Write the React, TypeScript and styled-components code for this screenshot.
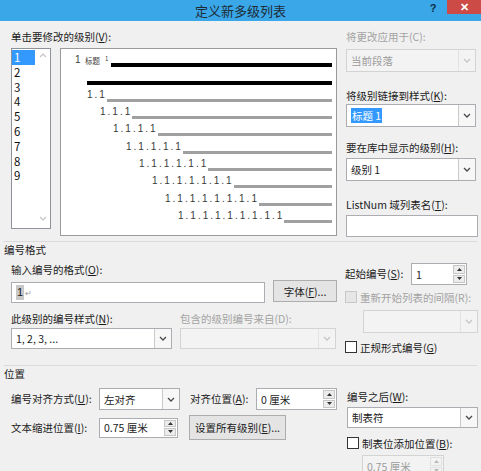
import React from "react";
import styled, { createGlobalStyle } from "styled-components";

const uiFont = `"Noto Sans CJK SC", "Microsoft YaHei", sans-serif`;

const GlobalStyle = createGlobalStyle`
  html, body {
    margin: 0;
    padding: 0;
    background: #f0f0f0;
  }
  body {
    font-family: ${uiFont};
    font-size: 10.5px;
    color: #1b1b1b;
  }
`;

const Dialog = styled.div`
  width: 481px;
  height: 471px;
  overflow: hidden;
  background: #f0f0f0;
  display: flex;
  flex-direction: column;
`;

const TitleBar = styled.div`
  flex: none;
  height: 21px;
  background: #3aa7e9;
  display: grid;
  grid-template-columns: 1fr auto 1fr;
  align-items: start;
`;

const TitleText = styled.div`
  grid-column: 2;
  line-height: 21px;
  font-size: 13px;
  color: #1d2b36;
`;

const TitleControls = styled.div`
  grid-column: 3;
  justify-self: end;
  display: flex;
  align-items: flex-start;
`;

const HelpButton = styled.span`
  width: 14px;
  margin-right: 7px;
  line-height: 17px;
  text-align: center;
  font-family: "Liberation Sans", sans-serif;
  font-weight: bold;
  font-size: 11px;
  color: #0e2f47;
`;

const CloseButton = styled.span`
  width: 34px;
  height: 14px;
  background: #cc4b47;
  color: #fff;
  display: flex;
  align-items: center;
  justify-content: center;
  font-family: "Liberation Sans", sans-serif;
  font-weight: bold;
  font-size: 11px;
`;

const TopArea = styled.div`
  display: flex;
  gap: 9px;
  margin-top: 8px;
  padding-left: 11px;
`;

const Column = styled.div<{ $w: number }>`
  width: ${(p) => p.$w}px;
  flex: none;
  display: flex;
  flex-direction: column;
`;

const Label = styled.div<{ $disabled?: boolean; $mt?: number; $w?: number; $ml?: number }>`
  flex: none;
  line-height: 16px;
  height: 16px;
  white-space: nowrap;
  color: ${(p) => (p.$disabled ? "#a3a3a3" : "#1b1b1b")};
  margin-top: ${(p) => p.$mt ?? 0}px;
  margin-left: ${(p) => p.$ml ?? 0}px;
  width: ${(p) => (p.$w ? `${p.$w}px` : "auto")};
`;

const LevelRow = styled.div`
  display: flex;
  gap: 9px;
  margin-top: 3px;
  align-items: flex-start;
`;

const LevelList = styled.div`
  width: 40px;
  height: 181px;
  box-sizing: border-box;
  border: 1px solid #8e9299;
  background: #fff;
  display: flex;
`;

const LevelItems = styled.div`
  width: 23px;
  padding-top: 1px;
`;

const LevelItem = styled.div<{ $selected?: boolean }>`
  height: 14.8px;
  line-height: 14.8px;
  padding-left: 2px;
  font-size: 11.5px;
  background: ${(p) => (p.$selected ? "#3399ff" : "transparent")};
  color: ${(p) => (p.$selected ? "#fff" : "#111")};
`;

const ListScroll = styled.div`
  flex: 1;
  display: flex;
  flex-direction: column;
  justify-content: space-between;
  align-items: center;
  padding: 4px 0 7px;
`;

const Preview = styled.div`
  width: 277px;
  height: 188px;
  box-sizing: border-box;
  border: 1px solid #9a9a9a;
  background: #fff;
  padding: 1px 4px 0 0;
  display: flex;
  flex-direction: column;
`;

const PreviewRow = styled.div<{ $indent: number }>`
  height: 17.3px;
  display: flex;
  align-items: flex-end;
  padding-left: ${(p) => p.$indent}px;
  box-sizing: border-box;
`;

const RowNumber = styled.span`
  font-family: "Liberation Sans", sans-serif;
  font-size: 10px;
  letter-spacing: 2px;
  line-height: 12px;
  color: #3a3a3a;
  margin-bottom: 1px;
`;

const HeadingTag = styled.span<{ $size: number; $ml: number; $mb: number }>`
  font-size: ${(p) => p.$size}px;
  line-height: ${(p) => p.$size + 2}px;
  color: #3a3a3a;
  margin-left: ${(p) => p.$ml}px;
  margin-bottom: ${(p) => p.$mb}px;
`;

const PreviewBar = styled.div<{ $heavy?: boolean; $ml?: number }>`
  flex: 1;
  height: ${(p) => (p.$heavy ? 4 : 3)}px;
  background: ${(p) => (p.$heavy ? "#000" : "#a0a0a0")};
  margin-left: ${(p) => p.$ml ?? 0}px;
`;

const Frame = styled.div<{ $w: number; $h: number; $disabled?: boolean; $mt?: number; $ml?: number }>`
  flex: none;
  width: ${(p) => p.$w}px;
  height: ${(p) => p.$h}px;
  margin-top: ${(p) => p.$mt ?? 0}px;
  margin-left: ${(p) => p.$ml ?? 0}px;
  box-sizing: border-box;
  border: 1px solid ${(p) => (p.$disabled ? "#d3d3d3" : "#abadb3")};
  background: ${(p) => (p.$disabled ? "#f3f3f3" : "#fff")};
  display: flex;
  align-items: stretch;
`;

const FieldValue = styled.div<{ $disabled?: boolean }>`
  flex: 1;
  min-width: 0;
  padding-left: 4px;
  display: flex;
  align-items: center;
  white-space: nowrap;
  color: ${(p) => (p.$disabled ? "#9c9c9c" : "#1b1b1b")};
`;

const ComboButton = styled.div<{ $disabled?: boolean }>`
  width: 16px;
  flex: none;
  border-left: 1px solid ${(p) => (p.$disabled ? "#e2e2e2" : "#c9c9c9")};
  background: ${(p) => (p.$disabled ? "#f3f3f3" : "#f7f7f7")};
  display: flex;
  align-items: center;
  justify-content: center;
`;

const SpinButtons = styled.div`
  width: 12px;
  flex: none;
  display: flex;
  flex-direction: column;
  gap: 1px;
  padding: 1px;
`;

const SpinHalf = styled.div<{ $disabled?: boolean }>`
  flex: 1;
  border: 1px solid ${(p) => (p.$disabled ? "#e0e0e0" : "#c6c6c6")};
  background: ${(p) => (p.$disabled ? "#f3f3f3" : "#ececec")};
  display: flex;
  align-items: center;
  justify-content: center;
`;

const Selection = styled.span`
  background: #3399ff;
  color: #fff;
  padding: 0 1px;
  line-height: 15px;
`;

const Caret = styled.span`
  background: #c8c8c8;
  padding: 0 1px;
  line-height: 15px;
  font-family: "Liberation Sans", sans-serif;
  font-size: 11px;
`;

const ReturnMark = styled.span`
  color: #9a9a9a;
  font-size: 8px;
  margin-left: 1px;
`;

const Button = styled.div<{ $w: number; $h: number; $ml?: number }>`
  flex: none;
  width: ${(p) => p.$w}px;
  height: ${(p) => p.$h}px;
  margin-left: ${(p) => p.$ml ?? 0}px;
  box-sizing: border-box;
  border: 1px solid #adadad;
  background: #e4e4e4;
  display: flex;
  align-items: center;
  justify-content: center;
  white-space: nowrap;
`;

const SectionHeader = styled.div<{ $mt: number }>`
  margin: ${(p) => p.$mt}px 4px 0;
  border-top: 1px solid #dadada;
  line-height: 16px;
  height: 16px;
`;

const SectionBody = styled.div<{ $gap: number }>`
  display: flex;
  gap: ${(p) => p.$gap}px;
  padding-left: 11px;
`;

const Row = styled.div<{ $mt?: number; $gap?: number; $align?: string }>`
  display: flex;
  align-items: ${(p) => p.$align ?? "center"};
  gap: ${(p) => p.$gap ?? 0}px;
  margin-top: ${(p) => p.$mt ?? 0}px;
`;

const CheckRow = styled.div<{ $mt: number }>`
  display: flex;
  align-items: center;
  gap: 3px;
  margin-top: ${(p) => p.$mt}px;
  height: 16px;
  white-space: nowrap;
`;

const CheckBox = styled.span<{ $disabled?: boolean }>`
  width: 12px;
  height: 12px;
  box-sizing: border-box;
  border: 1px solid ${(p) => (p.$disabled ? "#c8c8c8" : "#333")};
  background: ${(p) => (p.$disabled ? "#e6e6e6" : "#fff")};
`;

const CheckText = styled.span<{ $disabled?: boolean }>`
  color: ${(p) => (p.$disabled ? "#a3a3a3" : "#1b1b1b")};
`;

const Chevron = ({ color }: { color: string }) => (
  <svg width="8" height="5" viewBox="0 0 8 5">
    <polyline points="1,1 4,4 7,1" fill="none" stroke={color} strokeWidth="1.3" />
  </svg>
);

const ScrollArrow = ({ up }: { up?: boolean }) => (
  <svg width="8" height="5" viewBox="0 0 8 5">
    <polyline points={up ? "1,4 4,1 7,4" : "1,1 4,4 7,1"} fill="none" stroke="#c4c4c4" strokeWidth="1.2" />
  </svg>
);

const Triangle = ({ up, color }: { up?: boolean; color: string }) => (
  <svg width="5" height="3" viewBox="0 0 5 3">
    <polygon points={up ? "0,3 2.5,0 5,3" : "0,0 5,0 2.5,3"} fill={color} />
  </svg>
);

type FieldProps = {
  w: number;
  h: number;
  value?: React.ReactNode;
  disabled?: boolean;
  mt?: number;
  ml?: number;
};

const ComboBox = ({ w, h, value, disabled, mt, ml }: FieldProps) => (
  <Frame $w={w} $h={h} $disabled={disabled} $mt={mt} $ml={ml}>
    <FieldValue $disabled={disabled}>{value}</FieldValue>
    <ComboButton $disabled={disabled}>
      <Chevron color={disabled ? "#c6c6c6" : "#4a4a4a"} />
    </ComboButton>
  </Frame>
);

const SpinBox = ({ w, h, value, disabled, mt, ml }: FieldProps) => (
  <Frame $w={w} $h={h} $disabled={disabled} $mt={mt} $ml={ml}>
    <FieldValue $disabled={disabled}>{value}</FieldValue>
    <SpinButtons>
      <SpinHalf $disabled={disabled}>
        <Triangle up color={disabled ? "#b8b8b8" : "#333"} />
      </SpinHalf>
      <SpinHalf $disabled={disabled}>
        <Triangle color={disabled ? "#b8b8b8" : "#333"} />
      </SpinHalf>
    </SpinButtons>
  </Frame>
);

const levels = [2, 3, 4, 5, 6, 7, 8, 9];

const App: React.FC = () => {
  return (
    <>
      <GlobalStyle />
      <Dialog>
        <TitleBar>
          <TitleText>定义新多级列表</TitleText>
          <TitleControls>
            <HelpButton>?</HelpButton>
            <CloseButton>✕</CloseButton>
          </TitleControls>
        </TitleBar>

        <TopArea>
          <Column $w={326}>
            <Label>
              单击要修改的级别(<u>V</u>):
            </Label>
            <LevelRow>
              <LevelList>
                <LevelItems>
                  {[1, 2, 3, 4, 5, 6, 7, 8, 9].map((n) => (
                    <LevelItem key={n} $selected={n === 1}>
                      {n}
                    </LevelItem>
                  ))}
                </LevelItems>
                <ListScroll>
                  <ScrollArrow up />
                  <ScrollArrow />
                </ListScroll>
              </LevelList>
              <Preview>
                <PreviewRow $indent={14}>
                  <RowNumber>1</RowNumber>
                  <HeadingTag $size={7.5} $ml={2.5} $mb={2}>
                    标题
                  </HeadingTag>
                  <HeadingTag $size={6} $ml={5} $mb={4}>
                    1
                  </HeadingTag>
                  <PreviewBar $heavy $ml={2.5} />
                </PreviewRow>
                <PreviewRow $indent={26}>
                  <PreviewBar $heavy />
                </PreviewRow>
                {levels.map((n, i) => (
                  <PreviewRow key={n} $indent={26 + i * 13}>
                    <RowNumber>{Array(n).fill("1").join(".")}</RowNumber>
                    <PreviewBar />
                  </PreviewRow>
                ))}
              </Preview>
            </LevelRow>
          </Column>

          <Column $w={132}>
            <Label $disabled>将更改应用于(C):</Label>
            <ComboBox w={130} h={23} mt={4} disabled value="当前段落" />
            <Label $mt={16}>
              将级别链接到样式(<u>K</u>):
            </Label>
            <ComboBox w={130} h={23} value={<Selection>标题 1</Selection>} />
            <Label $mt={13}>
              要在库中显示的级别(<u>H</u>):
            </Label>
            <ComboBox w={130} h={23} mt={2} value="级别 1" />
            <Label $mt={16}>
              ListNum 域列表名(<u>T</u>):
            </Label>
            <Frame $w={132} $h={22} $mt={2} />
          </Column>
        </TopArea>

        <SectionHeader $mt={4}>编号格式</SectionHeader>
        <SectionBody $gap={8}>
          <Column $w={326}>
            <Label $mt={4}>
              输入编号的格式(<u>O</u>):
            </Label>
            <Row $mt={2} $gap={8} $align="flex-start">
              <Frame $w={254} $h={21} $mt={2}>
                <FieldValue>
                  <Caret>1</Caret>
                  <ReturnMark>↵</ReturnMark>
                </FieldValue>
              </Frame>
              <Button $w={64} $h={22}>
                字体(<u>F</u>)...
              </Button>
            </Row>
            <Row $mt={8}>
              <Label $w={169}>
                此级别的编号样式(<u>N</u>):
              </Label>
              <Label $disabled>包含的级别编号来自(D):</Label>
            </Row>
            <Row $mt={1} $gap={8}>
              <ComboBox w={161} h={21} value="1, 2, 3, ..." />
              <ComboBox w={156} h={21} disabled />
            </Row>
          </Column>

          <Column $w={133}>
            <Row $mt={5}>
              <Label $w={66}>
                起始编号(<u>S</u>):
              </Label>
              <SpinBox w={56} h={22} value="1" />
            </Row>
            <CheckRow $mt={4}>
              <CheckBox $disabled />
              <CheckText $disabled>重新开始列表的间隔(R):</CheckText>
            </CheckRow>
            <ComboBox w={115} h={23} mt={5} ml={18} disabled />
            <CheckRow $mt={6}>
              <CheckBox />
              <CheckText>
                正规形式编号(<u>G</u>)
              </CheckText>
            </CheckRow>
          </Column>
        </SectionBody>

        <SectionHeader $mt={10}>位置</SectionHeader>
        <SectionBody $gap={10}>
          <Column $w={326}>
            <Row $mt={6}>
              <Label $w={88}>
                编号对齐方式(<u>U</u>):
              </Label>
              <ComboBox w={81} h={22} value="左对齐" />
              <Label $w={66} $ml={10}>
                对齐位置(<u>A</u>):
              </Label>
              <SpinBox w={81} h={22} value="0 厘米" />
            </Row>
            <Row $mt={5}>
              <Label $w={88}>
                文本缩进位置(<u>I</u>):
              </Label>
              <SpinBox w={79} h={20} value="0.75 厘米" />
              <Button $w={97} $h={25} $ml={11}>
                设置所有级别(<u>E</u>)...
              </Button>
            </Row>
          </Column>

          <Column $w={131}>
            <Label $mt={7}>
              编号之后(<u>W</u>):
            </Label>
            <ComboBox w={131} h={21} mt={2} value="制表符" />
            <CheckRow $mt={7}>
              <CheckBox />
              <CheckText>
                制表位添加位置(<u>B</u>):
              </CheckText>
            </CheckRow>
            <SpinBox w={82} h={22} mt={4} ml={15} disabled value="0.75 厘米" />
          </Column>
        </SectionBody>
      </Dialog>
    </>
  );
};

export default App;
